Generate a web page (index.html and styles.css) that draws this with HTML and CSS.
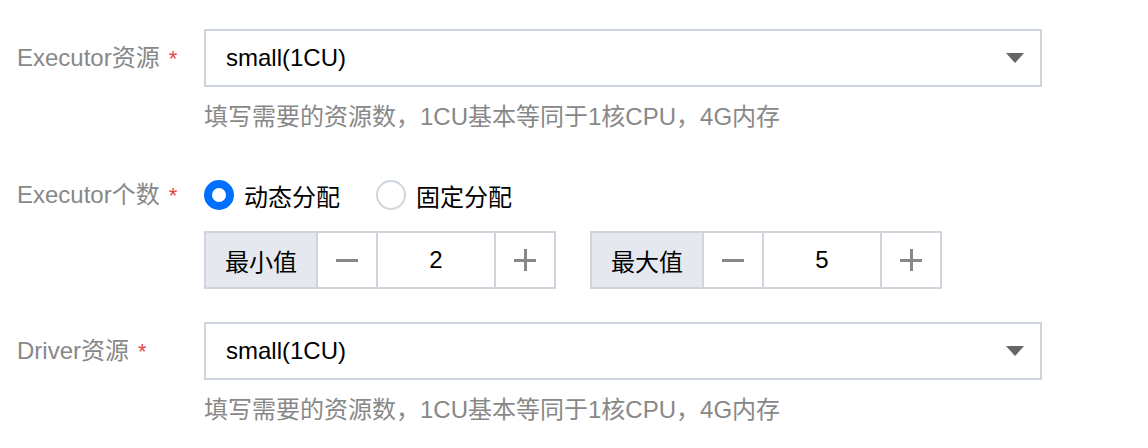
FILE: index.html
```html
<!DOCTYPE html>
<html lang="zh-CN">
<head>
<meta charset="utf-8">
<link rel="stylesheet" href="styles.css">
</head>
<body>
<div class="form">
  <div class="row row-select">
    <div class="label">Executor资源<span class="req">*</span></div>
    <div class="ctrl">
      <div class="select"><span>small(1CU)</span><i class="caret"></i></div>
      <div class="help">填写需要的资源数，1CU基本等同于1核CPU，4G内存</div>
    </div>
  </div>
  <div class="row row-count">
    <div class="label">Executor个数<span class="req">*</span></div>
    <div class="ctrl">
      <div class="radios">
        <label class="radio"><i class="dot on"></i>动态分配</label>
        <label class="radio"><i class="dot"></i>固定分配</label>
      </div>
      <div class="nums">
        <div class="num">
          <div class="num-label">最小值</div>
          <div class="btn minus"><i></i></div>
          <div class="val">2</div>
          <div class="btn plus"><i></i></div>
        </div>
        <div class="num">
          <div class="num-label">最大值</div>
          <div class="btn minus"><i></i></div>
          <div class="val">5</div>
          <div class="btn plus"><i></i></div>
        </div>
      </div>
    </div>
  </div>
  <div class="row row-select">
    <div class="label">Driver资源<span class="req">*</span></div>
    <div class="ctrl">
      <div class="select"><span>small(1CU)</span><i class="caret"></i></div>
      <div class="help">填写需要的资源数，1CU基本等同于1核CPU，4G内存</div>
    </div>
  </div>
</div>
</body>
</html>
```
FILE: styles.css
```css
html, body { margin: 0; padding: 0; background: #fff; }
body {
  font-family: "Liberation Sans", "Noto Sans CJK SC", sans-serif;
  font-size: 24px;
  color: #000;
}
.form { padding: 29px 0 0 0; }
.row { display: flex; }
.label {
  width: 204px;
  box-sizing: border-box;
  padding-left: 17px;
  color: #888;
  height: 58px;
  line-height: 58px;
  white-space: nowrap;
}
.req { color: #e54545; margin-left: 9px; font-size: 22px; }
.ctrl { display: flex; flex-direction: column; }
.select {
  width: 838px;
  height: 58px;
  box-sizing: border-box;
  border: 2px solid #cfd5de;
  display: flex;
  align-items: center;
  justify-content: space-between;
  padding: 0 16px 0 20px;
  color: #000;
}
.caret {
  width: 0; height: 0;
  border-left: 9px solid transparent;
  border-right: 9px solid transparent;
  border-top: 10px solid #666;
}
.help {
  color: #888;
  height: 60px;
  line-height: 60px;
}
.row-count { margin-top: 30px; margin-bottom: 33px; }
.radios { display: flex; height: 36px; align-items: center; gap: 36px; }
.row-count .label { height: 36px; line-height: 36px; }
.radio { display: flex; align-items: center; gap: 10px; color: #000; }
.dot {
  width: 30px; height: 30px; box-sizing: border-box;
  border-radius: 50%;
  border: 2px solid #cfd5de;
  background: #fff;
}
.dot.on { border: 8px solid #006eff; }
.nums { display: flex; gap: 34px; margin-top: 18px; }
.num {
  display: flex;
  height: 58px;
  box-sizing: border-box;
  border: 2px solid #cfd5de;
}
.num > div { display: flex; align-items: center; justify-content: center; }
.num-label { width: 110px; background: #e5e8ef; border-right: 2px solid #cfd5de; }
.btn { width: 58px; }
.btn.minus { border-right: 2px solid #cfd5de; }
.btn.plus { width: 58px; border-left: 2px solid #cfd5de; }
.val { width: 116px; }
.btn i { position: relative; width: 22px; height: 3px; background: #888; display: block; }
.btn.plus i::after {
  content: ""; position: absolute; left: 9.5px; top: -9.5px;
  width: 3px; height: 22px; background: #888;
}
```
